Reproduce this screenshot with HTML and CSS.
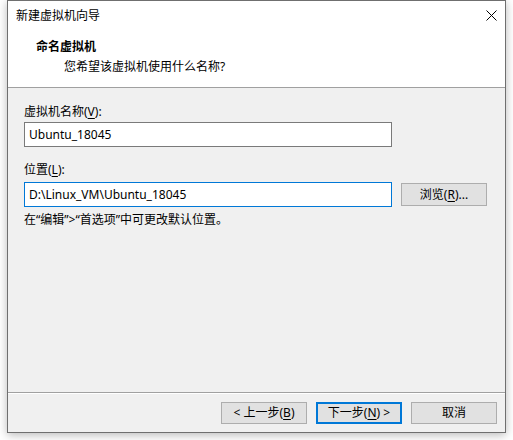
FILE: index.html
```html
<!DOCTYPE html>
<html lang="zh-CN">
<head>
<meta charset="utf-8">
<title>新建虚拟机向导</title>
<link rel="stylesheet" href="styles.css">
</head>
<body>
<div class="window">
  <div class="header">
    <div class="titlebar">
      <span class="title">新建虚拟机向导</span>
      <span class="close">
        <svg width="11" height="11" viewBox="0 0 11 11"><path d="M0.5 0.5 L10.5 10.5 M10.5 0.5 L0.5 10.5" stroke="#000" stroke-width="1" fill="none"/></svg>
      </span>
    </div>
    <div class="heading">命名虚拟机</div>
    <div class="subheading">您希望该虚拟机使用什么名称?</div>
  </div>
  <div class="content">
    <div class="label">虚拟机名称(<u>V</u>):</div>
    <div class="field-row first">
      <div class="input">Ubuntu_18045</div>
    </div>
    <div class="label second">位置(<u>L</u>):</div>
    <div class="field-row">
      <div class="input focused">D:\Linux_VM\Ubuntu_18045</div>
      <div class="button browse">浏览(<u>R</u>)...</div>
    </div>
    <div class="hint">在“编辑”&gt;“首选项”中可更改默认位置。</div>
  </div>
  <div class="footer">
    <div class="button">&lt; 上一步(<u>B</u>)</div>
    <div class="button default">下一步(<u>N</u>) &gt;</div>
    <div class="button">取消</div>
  </div>
</div>
</body>
</html>
```
FILE: styles.css
```css
* { box-sizing: border-box; }
html, body { margin: 0; padding: 0; }
body {
  background: #ffffff;
  font-family: "Noto Sans", "Noto Sans CJK SC", sans-serif;
  font-size: 12px;
  color: #000;
  width: 513px;
  height: 440px;
  overflow: hidden;
}
.window {
  margin-left: 7px;
  width: 499px;
  height: 433px;
  border: 1px solid #6f6f6f;
  background: #f0f0f0;
  display: flex;
  flex-direction: column;
  box-shadow: 0 2px 9px rgba(0,0,0,0.28);
}
.header {
  height: 87px;
  flex: none;
  background: #fff;
  border-bottom: 1px solid #a0a0a0;
}
.titlebar {
  height: 29px;
  display: flex;
  align-items: center;
  justify-content: space-between;
  padding-left: 8px;
}
.title { line-height: 29px; }
.close {
  width: 28px;
  height: 29px;
  display: flex;
  align-items: center;
  justify-content: center;
}
.close svg { display: block; }
.heading {
  margin-top: 8px;
  padding-left: 28px;
  line-height: 18px;
  font-weight: bold;
}
.subheading {
  margin-top: 2px;
  padding-left: 56px;
  line-height: 18px;
}
.content {
  flex: 1;
  padding: 16px 0 0 16px;
  border-bottom: 1px solid #a0a0a0;
  display: flex;
  flex-direction: column;
}
.label { line-height: 16px; }
.label.second { margin-top: 15px; }
.field-row {
  margin-top: 2px;
  display: flex;
  align-items: center;
  gap: 9px;
}
.field-row + .label { }
.label.second + .field-row { margin-top: 4px; }
.input {
  width: 368px;
  height: 25px;
  background: #fff;
  border: 1px solid #7a7a7a;
  padding-left: 4px;
  line-height: 23px;
  white-space: nowrap;
}
.input.focused { border-color: #0078d7; }
.button {
  width: 86px;
  height: 22px;
  border: 1px solid #adadad;
  background: #e1e1e1;
  display: flex;
  align-items: center;
  justify-content: center;
  line-height: 20px;
  white-space: nowrap;
}
.button.browse { height: 23px; margin-top: 1px; align-self: flex-start; }
.button.default { border: 2px solid #0078d7; }
.hint {
  margin-top: 5px;
  line-height: 16px;
}
.footer {
  flex: none;
  height: 39px;
  border-top: 1px solid #fff;
  padding: 8px 8px 0 0;
  display: flex;
  justify-content: flex-end;
  align-items: flex-start;
  gap: 9px;
}
u { text-decoration: underline; text-underline-offset: 2px; }
```
